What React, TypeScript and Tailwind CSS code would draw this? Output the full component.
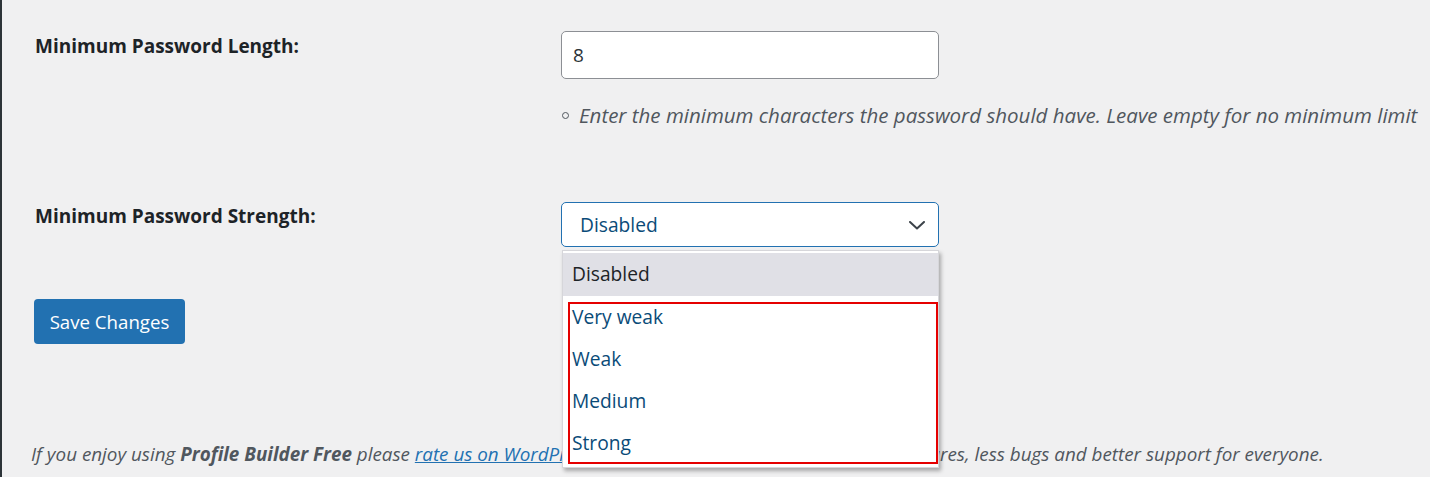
import React from "react";

const font = { fontFamily: '"Open Sans", "Noto Sans", sans-serif' };

function Chevron() {
  return (
    <svg width="16" height="9" viewBox="0 0 16 9" fill="none">
      <polyline points="1,1 8,7.5 15,1" stroke="#3c434a" strokeWidth="2" strokeLinecap="round" strokeLinejoin="round" />
    </svg>
  );
}

export default function App() {
  const options = ["Very weak", "Weak", "Medium", "Strong"];
  return (
    <div
      className="relative h-[477px] w-full overflow-hidden border-l-2 border-[#2c3338] bg-[#f0f0f1] pl-[33px] pt-[31px] text-[19px] text-[#1d2327]"
      style={font}
    >
      {/* Row 1 */}
      <div className="flex">
        <div className="w-[526px] pt-[2px] font-bold leading-[26px]">Minimum Password Length:</div>
        <div className="flex flex-col">
          <div className="flex h-[48px] w-[378px] items-center rounded-[5px] border border-[#8c8f94] bg-white pl-[11px] text-[#2c3338]">
            8
          </div>
          <div className="mt-[23px] flex items-center whitespace-nowrap text-[20.5px] leading-[26px] text-[#50575e] italic">
            <span className="ml-[1px] mr-[10px] inline-block h-[7px] w-[7px] shrink-0 rounded-full border border-[#50575e]" />
            Enter the minimum characters the password should have. Leave empty for no minimum limit
          </div>
        </div>
      </div>

      {/* Row 2 */}
      <div className="mt-[74px] flex">
        <div className="w-[526px] pt-[1px] font-bold leading-[26px]">Minimum Password Strength:</div>
        <div className="relative text-[19.2px]">
          <div className="flex h-[45px] w-[378px] items-center justify-between rounded-[5px] border border-[#2271b1] bg-white pl-[18px] pr-[13px] pt-[2px] text-[#0a4b78]">
            <span>Disabled</span>
            <Chevron />
          </div>
          {/* native dropdown popup */}
          <div className="absolute left-[1px] top-[48px] z-10 w-[377px] border border-[#d6d6da] bg-white pb-[3px] pt-[2px] shadow-[2px_3px_4px_rgba(0,0,0,0.3)]">
            <div className="flex h-[43px] items-center bg-[#e0e0e6] pl-[9px] text-[#1d2327]">Disabled</div>
            {options.map((o) => (
              <div key={o} className="flex h-[42px] items-center pl-[9px] pt-[1px] text-[#0a4b78]">
                {o}
              </div>
            ))}
            <div className="absolute left-[5px] top-[51px] h-[162px] w-[370px] border-2 border-[#e50000]" />
          </div>
        </div>
      </div>

      {/* Save button */}
      <button className="ml-[-1px] mt-[52px] flex h-[45px] w-[151px] items-center justify-center rounded-[4px] bg-[#2271b1] text-[18.67px] text-white">
        Save Changes
      </button>

      {/* Footer */}
      <p className="ml-[-4px] mt-[97px] whitespace-nowrap text-[18.84px] leading-[26px] text-[#50575e] italic">
        If you enjoy using <strong className="font-bold">Profile Builder Free</strong> please{" "}
        <a className="text-[#2271b1] underline">rate us on WordPress.org</a>. More happy users means more features, less bugs and better support for everyone.
      </p>
    </div>
  );
}
